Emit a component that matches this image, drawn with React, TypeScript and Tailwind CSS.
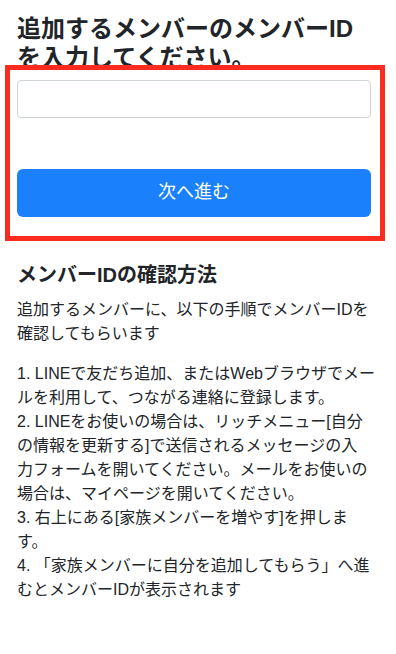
import React from 'react';

// line breaks follow the reference
const steps = [
  ['1. LINEで友だち追加、またはWebブラウザでメー', 'ルを利用して、つながる連絡に登録します。'],
  [
    '2. LINEをお使いの場合は、リッチメニュー[自分',
    'の情報を更新する]で送信されるメッセージの入',
    '力フォームを開いてください。メールをお使いの',
    '場合は、マイページを開いてください。',
  ],
  ['3. 右上にある[家族メンバーを増やす]を押しま', 'す。'],
  ['4. 「家族メンバーに自分を追加してもらう」へ進', 'むとメンバーIDが表示されます'],
];

export default function App() {
  return (
    <div
      className="min-h-[654px] bg-white pl-[17px] pr-[25px] pt-[15px] text-[#212529]"
      style={{ fontFamily: '"Liberation Sans", "Noto Sans CJK JP", sans-serif' }}
    >
      {/* Title */}
      <h1 className="text-[24px] font-bold leading-[1.2]">
        追加するメンバーのメンバーIDを入力してください。
      </h1>

      {/* Highlighted form */}
      <div className="relative -mt-[8px] -ml-[12px] -mr-[14px] border-[5px] border-[#fb2b1f] bg-white pl-[7px] pr-[9px] pt-[10px] pb-[19px]">
        <input
          type="text"
          className="block h-[38px] w-full rounded-[4px] border border-[#ced4da] bg-white px-3 text-base outline-none"
        />
        <button className="mt-[51px] flex h-[48px] w-full items-center justify-center rounded-[6px] bg-[#1a80fc] text-[18px] text-white">
          次へ進む
        </button>
      </div>

      {/* How to check */}
      <h2 className="mt-[22px] mb-[11px] text-[20px] font-bold leading-[1.2]">
        メンバーIDの確認方法
      </h2>
      <p className="mb-4 text-base leading-6">
        追加するメンバーに、以下の手順でメンバーIDを確認してもらいます
      </p>
      <div className="-mr-[10px] text-base leading-6">
        {steps.map((lines) => (
          <div key={lines[0]}>
            {lines.map((l) => (
              <div key={l} className="whitespace-nowrap">{l}</div>
            ))}
          </div>
        ))}
      </div>
    </div>
  );
}
